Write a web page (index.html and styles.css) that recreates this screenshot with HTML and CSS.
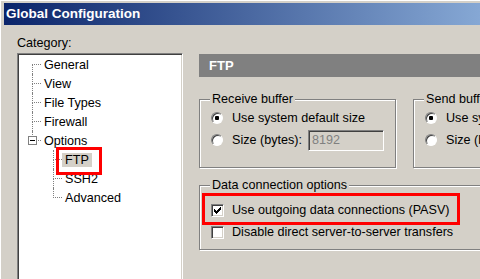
FILE: index.html
```html
<!DOCTYPE html>
<html lang="en">
<head>
    <meta charset="UTF-8">
    <meta name="viewport" content="width=device-width, initial-scale=1.0">
    <title>Global Configuration</title>
    <link rel="stylesheet" href="styles.css">
</head>
<body>
    <div class="window">
        <div class="titlebar">Global Configuration</div>
        <div class="content">
            <div class="sidebar">
                <div class="label">Category:</div>
                <div class="tree">
                    <div class="node"><span class="branch first"></span><span class="name">General</span></div>
                    <div class="node"><span class="branch"></span><span class="name">View</span></div>
                    <div class="node"><span class="branch"></span><span class="name">File Types</span></div>
                    <div class="node"><span class="branch"></span><span class="name">Firewall</span></div>
                    <div class="node"><span class="branch last"><span class="expander"></span></span><span class="name">Options</span></div>
                    <div class="node child"><span class="branch"></span><span class="name selected">FTP<span class="callout"></span></span></div>
                    <div class="node child"><span class="branch"></span><span class="name">SSH2</span></div>
                    <div class="node child"><span class="branch last"></span><span class="name">Advanced</span></div>
                </div>
            </div>

            <div class="panel">
                <div class="panel-head">FTP</div>

                <div class="buffers">
                    <fieldset class="group">
                        <legend>Receive buffer</legend>
                        <div class="option"><span class="radio checked"></span>Use system default size</div>
                        <div class="option"><span class="radio"></span><span class="field-label">Size (bytes):</span><input class="field" type="text" value="8192" disabled></div>
                    </fieldset>
                    <fieldset class="group">
                        <legend>Send buffer</legend>
                        <div class="option"><span class="radio checked"></span>Use system default size</div>
                        <div class="option"><span class="radio"></span><span class="field-label">Size (bytes):</span><input class="field" type="text" value="8192" disabled></div>
                    </fieldset>
                </div>

                <fieldset class="group wide">
                    <legend>Data connection options</legend>
                    <div class="option flagged">
                        <span class="check"><svg width="7" height="7" viewBox="0 0 7 7"><path d="M0 2h1v1h1v1h1v-1h1v-1h1v-1h1v-1h1v3h-1v1h-1v1h-1v1h-1v1h-1v-1h-1v-1h-1z" fill="#000"/></svg></span>
                        Use outgoing data connections (PASV)
                        <span class="callout"></span>
                    </div>
                    <div class="option"><span class="check"></span>Disable direct server-to-server transfers</div>
                </fieldset>
            </div>
        </div>
    </div>
</body>
</html>
```

FILE: styles.css
```css
body {
    margin: 0;
    background: #d4d0c8;
    font-family: "Liberation Sans", Arial, sans-serif;
    font-size: 12.6px;
    color: #000;
    overflow: hidden;
}

.window {
    width: 640px;
    height: 279px;
    padding: 3px 0 0 4px;
    box-shadow: inset 2px 2px 0 -1px #fff; /* thin white frame line */
    overflow: hidden;
}

.titlebar {
    height: 22px;
    line-height: 22px;
    padding-left: 2px;
    background: linear-gradient(to right, #0a246a 0, #a6caf0 600px);
    color: #fff;
    font-weight: bold;
    font-size: 13.5px;
}

.content {
    display: flex;
    gap: 16px;
    padding-left: 13px;
}

/* left column: category tree */
.sidebar {
    flex: none;
    width: 166px;
}

.label {
    margin-top: 10px;
    line-height: 16px;
}

.tree {
    margin-top: 2px;
    height: 240px;
    padding: 1px 0 0 1px;
    background: #fff;
    border: 1px solid;
    border-color: #808080 #fff #fff #808080;
    box-shadow: inset 1px 1px #404040, inset -1px -1px #d4d0c8;
}

.node {
    display: flex;
    align-items: center;
    height: 19px;
    padding-left: 13px;
}
.node.child {
    padding-left: 34px;
}

.branch {
    align-self: stretch;
    width: 9px;
    display: flex;
    flex-direction: column;
    position: relative;
}
.branch::before,
.branch::after {
    content: "";
    border-left: 1px dotted #808080;
}
.branch::before {
    height: 10px;
    box-sizing: border-box;
    border-bottom: 1px dotted #808080;
}
.branch::after {
    flex: 1;
}
.branch.first::before {
    border-left: none;
}
.branch.last::after {
    border-left: none;
}

.expander {
    position: absolute;
    left: -4px;
    top: 5px;
    width: 9px;
    height: 9px;
    box-sizing: border-box;
    border: 1px solid #808080;
    background: linear-gradient(#000, #000) center / 5px 1px no-repeat, #fff;
}

.name {
    padding: 0 3px;
    line-height: 14px;
    white-space: nowrap;
}
.name.selected {
    position: relative;
    background: #d4d0c8;
}

/* red annotation boxes */
.callout {
    position: absolute;
    left: -6px;
    right: -10px;
    top: -6px;
    bottom: -8px;
    border: 3px solid #f00;
}

/* right column */
.panel {
    flex: none;
    width: 420px;
    padding-top: 29px;
}

.panel-head {
    height: 23px;
    line-height: 23px;
    padding-left: 10px;
    background: #808080;
    color: #fff;
    font-weight: bold;
    font-size: 13px;
}

.buffers {
    display: flex;
    gap: 17px;
    margin-top: 15px;
}

.group {
    margin: 0;
    min-width: 0;
    padding: 1px 10px 16px;
    border: 1px solid #808080;
    box-shadow: 1px 1px 0 #fff, inset 1px 1px 0 #fff;
    box-sizing: border-box;
    width: 197px;
}
.group legend {
    padding: 0 2px;
    line-height: 14px;
    background: #d4d0c8;
}
.group.wide {
    width: 412px;
    margin-top: 10px;
    padding-top: 7px;
    padding-bottom: 6px;
}

.option {
    display: flex;
    align-items: center;
    height: 22px;
    white-space: nowrap;
}
.option.flagged {
    position: relative;
    width: fit-content;
}
.option.flagged .callout {
    left: -8px;
    right: -10px;
    top: -6px;
    bottom: -4px;
}

.radio {
    flex: none;
    width: 12px;
    height: 12px;
    box-sizing: border-box;
    margin: 0 9px 0 1px;
    border-radius: 50%;
    border: 1px solid;
    border-color: #808080 #fff #fff #808080;
    box-shadow: inset 1px 1px #404040;
    background: #fff;
}
.radio.checked {
    background: radial-gradient(circle, #000 2px, #fff 2.5px);
}

.check {
    flex: none;
    width: 13px;
    height: 13px;
    box-sizing: border-box;
    margin: 0 8px 0 1px;
    border: 1px solid;
    border-color: #808080 #fff #fff #808080;
    box-shadow: inset 1px 1px #404040, inset -1px -1px #d4d0c8;
    background: #fff;
    display: flex;
    align-items: center;
    justify-content: center;
}

.field-label {
    width: 76px;
}

.field {
    width: 76px;
    height: 21px;
    box-sizing: border-box;
    padding: 0 3px;
    font: inherit;
    border: 1px solid;
    border-color: #808080 #fff #fff #808080;
    box-shadow: inset 1px 1px #404040, inset -1px -1px #d4d0c8;
    background: #d4d0c8;
}
.field:disabled {
    color: #808080;
}
```
